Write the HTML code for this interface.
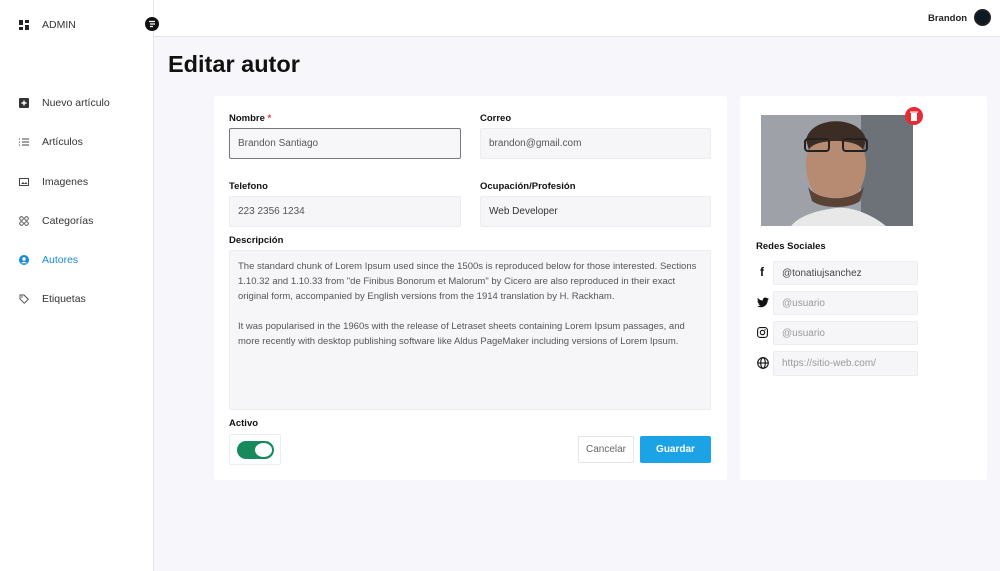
<!DOCTYPE html>
<html><head><meta charset="utf-8"><style>
*{box-sizing:border-box;margin:0;padding:0}
body{width:1000px;height:571px;overflow:hidden;background:#f7f7fb;font-family:"Liberation Sans",sans-serif;position:relative;color:#222}
.side{position:absolute;left:0;top:0;width:154px;height:571px;background:#fff;border-right:1px solid #e6e6ec}
.hdr{position:absolute;left:154px;top:0;right:0;height:37px;background:#fff;border-bottom:1px solid #e4e4ea}
.nav{position:absolute;left:19px;font-size:10.5px;color:#333;display:flex;align-items:center}
.nav svg{width:10px;height:10px;margin-right:13px}
.a{position:absolute}
.lbl{position:absolute;font-size:9.5px;font-weight:bold;color:#111}
.inp{position:absolute;background:#f6f6f9;border:1px solid #ececf1;border-radius:2px;font-size:10px;color:#555;padding-left:8px;display:flex;align-items:center}
.card{position:absolute;background:#fff;border-radius:3px}
</style></head><body>
<div class="side">
 <div class="nav" style="top:19px"><svg viewBox="0 0 10 10"><rect x="0" y="0" width="4" height="5" fill="#222"/><rect x="6" y="0" width="4" height="3" fill="#222"/><rect x="0" y="7" width="4" height="3" fill="#222"/><rect x="6" y="5" width="4" height="5" fill="#222"/></svg>ADMIN</div>
 <div class="nav" style="top:97px"><svg viewBox="0 0 10 10"><rect width="10" height="10" rx="1" fill="#333"/><path d="M5 2.5v5M2.5 5h5" stroke="#fff" stroke-width="1.4"/></svg>Nuevo artículo</div>
 <div class="nav" style="top:136px"><svg viewBox="0 0 10 10"><path d="M0 2h1M3 2h7M0 5h1M3 5h7M0 8h1M3 8h7" stroke="#444" stroke-width=".9"/></svg>Artículos</div>
 <div class="nav" style="top:176px"><svg viewBox="0 0 10 10"><rect x=".5" y="1.5" width="9" height="7" fill="none" stroke="#444"/><path d="M2 7l2-2 1.5 1.5L7 5l1.5 2z" fill="#444"/></svg>Imagenes</div>
 <div class="nav" style="top:215px"><svg viewBox="0 0 10 10"><g fill="none" stroke="#444" stroke-width=".9"><circle cx="2.5" cy="2.5" r="1.8"/><circle cx="7.5" cy="2.5" r="1.8"/><circle cx="2.5" cy="7.5" r="1.8"/><circle cx="7.5" cy="7.5" r="1.8"/></g></svg>Categorías</div>
 <div class="nav" style="top:254px;color:#1a8ad8"><svg viewBox="0 0 10 10"><circle cx="5" cy="5" r="5" fill="#1a8ad8"/><circle cx="5" cy="4" r="1.7" fill="#fff"/><path d="M2 8.2c1.5-2 4.5-2 6 0" fill="#fff"/></svg>Autores</div>
 <div class="nav" style="top:293px"><svg viewBox="0 0 10 10"><path d="M1 1h4l4.3 4.3-4 4L1 5z" fill="none" stroke="#444" stroke-width=".9"/><circle cx="3" cy="3" r=".7" fill="#444"/></svg>Etiquetas</div>
</div>
<div class="hdr"></div>
<svg class="a" style="left:145px;top:17px;z-index:5" width="14" height="14" viewBox="0 0 14 14"><circle cx="7" cy="7" r="7" fill="#111"/><path d="M4 4.5h6M5 7h5M5 9.5h3" stroke="#fff" stroke-width="1.3"/></svg>
<div class="a" style="left:928px;top:13px;font-size:9.5px;font-weight:bold">Brandon</div>
<div class="a" style="left:974px;top:9px;width:17px;height:17px;border-radius:50%;background:#0c1a26;border:2px solid #222"></div>
<div class="a" style="left:168px;top:51px;font-size:23.5px;font-weight:bold;color:#111">Editar autor</div>

<div class="card" style="left:214px;top:96px;width:513px;height:384px"></div>
<div class="lbl" style="left:229px;top:113px">Nombre <span style="color:#e33">*</span></div>
<div class="inp" style="left:229px;top:128px;width:232px;height:31px;border:1px solid #777;background:#f7f7fa">Brandon Santiago</div>
<div class="lbl" style="left:480px;top:113px">Correo</div>
<div class="inp" style="left:480px;top:128px;width:231px;height:31px">brandon@gmail.com</div>
<div class="lbl" style="left:229px;top:181px">Telefono</div>
<div class="inp" style="left:229px;top:196px;width:232px;height:31px">223 2356 1234</div>
<div class="lbl" style="left:480px;top:181px">Ocupación/Profesión</div>
<div class="inp" style="left:480px;top:196px;width:231px;height:31px;color:#333">Web Developer</div>
<div class="lbl" style="left:229px;top:235px">Descripción</div>
<div class="inp" style="left:229px;top:250px;width:482px;height:160px;align-items:flex-start;padding:8px 8px;line-height:15px;color:#555;font-size:9.5px">The standard chunk of Lorem Ipsum used since the 1500s is reproduced below for those interested. Sections 1.10.32 and 1.10.33 from "de Finibus Bonorum et Malorum" by Cicero are also reproduced in their exact original form, accompanied by English versions from the 1914 translation by H. Rackham.<br><br>It was popularised in the 1960s with the release of Letraset sheets containing Lorem Ipsum passages, and more recently with desktop publishing software like Aldus PageMaker including versions of Lorem Ipsum.</div>
<div class="lbl" style="left:229px;top:418px">Activo</div>
<div class="a" style="left:229px;top:434px;width:52px;height:31px;border:1px solid #ececf1;border-radius:2px;background:#fff"></div>
<div class="a" style="left:237px;top:441px;width:37px;height:18px;border-radius:9px;background:#178a5c"></div>
<div class="a" style="left:255px;top:443px;width:17px;height:14px;border-radius:50%;background:#fff"></div>
<div class="a" style="left:578px;top:436px;width:56px;height:27px;border:1px solid #e4e4ea;border-radius:2px;font-size:10px;color:#666;display:flex;align-items:center;justify-content:center;background:#fff">Cancelar</div>
<div class="a" style="left:640px;top:436px;width:71px;height:27px;background:#1ba3e6;border-radius:2px;font-size:10px;color:#fff;font-weight:bold;display:flex;align-items:center;justify-content:center">Guardar</div>

<div class="card" style="left:740px;top:96px;width:247px;height:384px"></div>
<svg class="a" style="left:761px;top:115px" width="152" height="111" viewBox="0 0 152 111"><rect width="152" height="111" fill="#9ea2a8"/><rect x="100" width="52" height="111" fill="#6d7178"/><path d="M30 111c10-12 30-16 45-18s35 6 50 18z" fill="#e8e8e8"/><ellipse cx="75" cy="50" rx="30" ry="40" fill="#b78a72"/><path d="M45 25c5-25 55-25 60 0l-3 10c-5-12-50-12-54 0z" fill="#3b2c24"/><path d="M47 72c10 15 46 15 56 0l-4 14c-10 8-38 8-48 0z" fill="#5a4236"/><rect x="44" y="24" width="24" height="12" rx="3" fill="none" stroke="#222" stroke-width="2"/><rect x="82" y="24" width="24" height="12" rx="3" fill="none" stroke="#222" stroke-width="2"/></svg>
<div class="a" style="left:905px;top:107px;width:18px;height:18px;border-radius:50%;background:#e52b35"></div>
<svg class="a" style="left:910px;top:111px" width="8" height="10" viewBox="0 0 8 10"><rect x="1" y="2" width="6" height="8" fill="#fff"/><rect x="0" y="0.5" width="8" height="1.2" fill="#fff"/></svg>
<div class="lbl" style="left:756px;top:241px">Redes Sociales</div>
<div class="inp" style="left:773px;top:261px;width:145px;height:24px;color:#444">@tonatiujsanchez</div>
<div class="inp" style="left:773px;top:291px;width:145px;height:24px;color:#999">@usuario</div>
<div class="inp" style="left:773px;top:321px;width:145px;height:24px;color:#999">@usuario</div>
<div class="inp" style="left:773px;top:351px;width:145px;height:25px;color:#999">https://sitio-web.com/</div>
<div class="a" style="left:760px;top:265px;font-size:12px;font-weight:bold;color:#111">f</div>
<svg class="a" style="left:757px;top:297px" width="12" height="11" viewBox="0 0 24 20"><path d="M24 2.4a10 10 0 01-2.8.8A5 5 0 0023.3.4a10 10 0 01-3.1 1.2A4.9 4.9 0 0011.8 6 14 14 0 011.7.9a4.9 4.9 0 001.5 6.6A4.9 4.9 0 01.96 6.9 4.9 4.9 0 004.9 11.8a5 5 0 01-2.2.1 4.9 4.9 0 004.6 3.4A9.9 9.9 0 010 17.3 14 14 0 007.5 19.5c9.1 0 14-7.5 14-14v-.6A10 10 0 0024 2.4z" fill="#111"/></svg>
<svg class="a" style="left:757px;top:327px" width="11" height="11" viewBox="0 0 11 11"><rect x=".6" y=".6" width="9.8" height="9.8" rx="2.5" fill="none" stroke="#111" stroke-width="1.1"/><circle cx="5.5" cy="5.5" r="2.2" fill="none" stroke="#111" stroke-width="1.1"/><circle cx="8.2" cy="2.8" r=".6" fill="#111"/></svg>
<svg class="a" style="left:757px;top:357px" width="12" height="12" viewBox="0 0 12 12"><g fill="none" stroke="#111" stroke-width="1.1"><circle cx="6" cy="6" r="5.3"/><ellipse cx="6" cy="6" rx="2.3" ry="5.3"/><path d="M.7 6h10.6"/></g></svg>
</body></html>
